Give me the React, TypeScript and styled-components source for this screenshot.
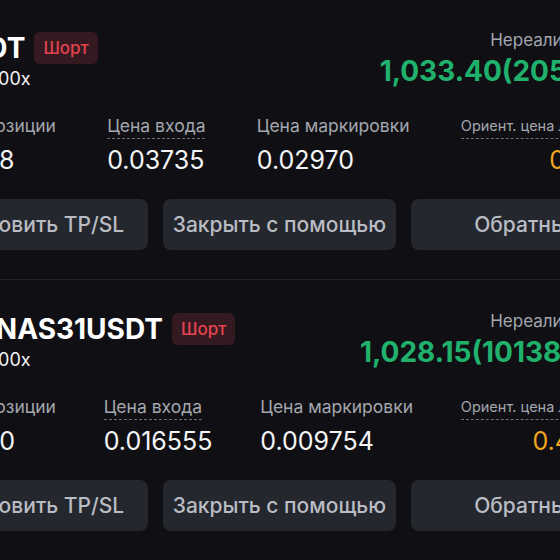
import React from "react";
import styled, { createGlobalStyle } from "styled-components";

const Global = createGlobalStyle`
  html, body { margin: 0; padding: 0; background: #101014; overflow: hidden; }
  body { font-family: Inter, "Noto Sans", "Liberation Sans", sans-serif; color: #f2f3f5; }
`;

const Page = styled.div`
  width: 727px;
  margin-left: -84px;
  margin-top: -1px;
`;

const Card = styled.section`
  padding: 29px 0 29px;
  border-bottom: 1px solid #24252a;
`;

const Header = styled.div`
  display: flex;
  justify-content: space-between;
  align-items: flex-start;
`;

const Left = styled.div`
  display: flex;
  flex-direction: column;
`;

const TitleRow = styled.div`
  display: flex;
  align-items: center;
  gap: 9px;
  margin-top: 4px;
  height: 32px;
`;

const Title = styled.div`
  font-size: 28px;
  font-weight: 700;
  line-height: 32px;
  color: #ffffff;
  white-space: nowrap;
`;

const Badge = styled.span`
  display: inline-flex;
  align-items: center;
  justify-content: center;
  height: 32px;
  padding: 0 9px;
  border-radius: 6px;
  background: #341a20;
  color: #e2434f;
  font-size: 17px;
  font-weight: 500;
`;

const Leverage = styled.div`
  margin-top: 5px;
  font-size: 18px;
  line-height: 20px;
  color: #f2f3f5;
  white-space: nowrap;
`;

const Right = styled.div`
  display: flex;
  flex-direction: column;
  align-items: flex-end;
`;

const PnlLabel = styled.div`
  margin-top: 1px;
  font-size: 17px;
  line-height: 22px;
  color: #a4a7ae;
  white-space: nowrap;
`;

const PnlValue = styled.div`
  margin-top: 3px;
  font-size: 28px;
  font-weight: 700;
  line-height: 34px;
  color: #20b26c;
  white-space: nowrap;
`;

const Stats = styled.div`
  display: flex;
  justify-content: space-between;
  margin-top: 26px;
`;

const Stat = styled.div<{ $align?: "left" | "right" }>`
  display: flex;
  flex-direction: column;
  align-items: ${(p) => (p.$align === "right" ? "flex-end" : "flex-start")};
`;

const Label = styled.div<{ $dotted?: boolean; $small?: boolean }>`
  font-size: ${(p) => (p.$small ? "14.5px" : "17.5px")};
  line-height: 22px;
  color: #a4a7ae;
  white-space: nowrap;
  padding-bottom: 1px;
  border-bottom: 1px dashed ${(p) => (p.$dotted ? "#6b6e75" : "transparent")};
`;

const Value = styled.div<{ $color?: string }>`
  margin-top: 6px;
  font-size: 25px;
  line-height: 30px;
  color: ${(p) => p.$color || "#f4f5f7"};
  white-space: nowrap;
`;

const Actions = styled.div`
  display: grid;
  grid-template-columns: repeat(3, 1fr);
  gap: 15px;
  margin-top: 24px;
`;

const ActionButton = styled.button`
  height: 51px;
  border: none;
  border-radius: 8px;
  background: #25272e;
  color: #b9bcc3;
  font-family: inherit;
  font-size: 21px;
  font-weight: 500;
  white-space: nowrap;
  overflow: hidden;
  padding: 0;
`;

type Pos = {
  symbol: string;
  leverage: string;
  pnl: string;
  size: string;
  entry: string;
  mark: string;
  liq: string;
};

const positions: Pos[] = [
  {
    symbol: "TJUSDT",
    leverage: "Кросс • 100x",
    pnl: "1,033.40(205.14%)",
    size: "235,088",
    entry: "0.03735",
    mark: "0.02970",
    liq: "0.03912",
  },
  {
    symbol: "DOGENAS31USDT",
    leverage: "Кросс • 100x",
    pnl: "1,028.15(10138.27%)",
    size: "253,280",
    entry: "0.016555",
    mark: "0.009754",
    liq: "0.418264",
  },
];

function PositionCard({ p }: { p: Pos }) {
  return (
    <Card>
      <Header>
        <Left>
          <TitleRow>
            <Title>{p.symbol}</Title>
            <Badge>Шорт</Badge>
          </TitleRow>
          <Leverage>{p.leverage}</Leverage>
        </Left>
        <Right>
          <PnlLabel>Нереализованный</PnlLabel>
          <PnlValue>{p.pnl}</PnlValue>
        </Right>
      </Header>
      <Stats>
        <Stat>
          <Label>Размер позиции</Label>
          <Value>{p.size}</Value>
        </Stat>
        <Stat>
          <Label $dotted>Цена входа</Label>
          <Value>{p.entry}</Value>
        </Stat>
        <Stat>
          <Label>Цена маркировки</Label>
          <Value>{p.mark}</Value>
        </Stat>
        <Stat $align="right">
          <Label $dotted $small>
            Ориент. цена ликвидации
          </Label>
          <Value $color="#f0a51e">{p.liq}</Value>
        </Stat>
      </Stats>
      <Actions>
        <ActionButton>Установить TP/SL</ActionButton>
        <ActionButton>Закрыть с помощью</ActionButton>
        <ActionButton>Обратный</ActionButton>
      </Actions>
    </Card>
  );
}

export default function App() {
  return (
    <>
      <Global />
      <Page>
        {positions.map((p) => (
          <PositionCard key={p.symbol} p={p} />
        ))}
      </Page>
    </>
  );
}
